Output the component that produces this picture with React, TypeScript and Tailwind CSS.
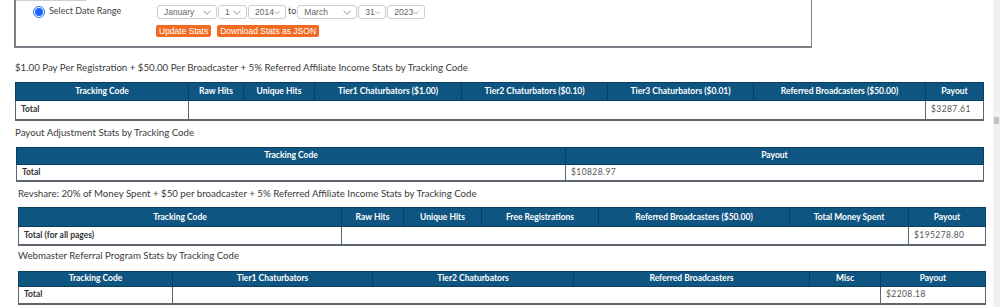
import React, {FC} from 'react';

type Col = { label: string, w: number };

interface StatsTableProps {
    cols: Col[],
    first: string,
    payout: string,
    headH: string,
    bodyH: string,
    className?: string,
}

const StatsTable: FC<StatsTableProps> = ({cols, first, payout, headH, bodyH, className}) => {
    return (
        <table className={`table-fixed border-collapse ${className ?? ''}`}>
            <colgroup>
                {cols.map((c, i) => <col key={i} style={{width: c.w}}/>)}
            </colgroup>
            <thead>
            <tr className={`${headH} bg-[#0f5581]`}>
                {cols.map((c, i) => (
                    <th
                        key={i}
                        className="border border-[#0a3d5e] p-0 text-center text-[8.5px] font-bold text-white"
                    >
                        {c.label}
                    </th>
                ))}
            </tr>
            </thead>
            <tbody>
            <tr className={`${bodyH} bg-white`}>
                {cols.map((c, i) => {
                    const isFirst = i === 0;
                    const isLast = i === cols.length - 1;
                    return (
                        <td
                            key={i}
                            className={`p-0 pl-[5px] text-left text-[8.5px] border-b-2 border-b-[#5d6670] ${
                                isFirst ? 'border-l border-r border-l-[#5d6670] border-r-[#5d6670] font-bold text-[#333]' : ''
                            } ${isLast ? 'border-l border-r border-[#5d6670] text-[#555] tracking-[0.4px]' : ''}`}
                        >
                            {isFirst ? first : isLast ? payout : ''}
                        </td>
                    );
                })}
            </tr>
            </tbody>
        </table>
    );
};

const Select: FC<{ value: string, w: string }> = ({value, w}) => (
    <div
        className={`${w} h-[14px] flex items-center justify-between rounded-[3px] border border-[#cdcdcd] bg-white pl-[6px] pr-[5px] font-['Liberation_Sans',sans-serif] text-[8.5px] text-[#666]`}
    >
        <span>{value}</span>
        <svg width="8" height="5" viewBox="0 0 8 5" className="text-[#888]">
            <path d="M0.5 0.8 L4 4.2 L7.5 0.8" fill="none" stroke="currentColor" strokeWidth="0.9"/>
        </svg>
    </div>
);

const Heading: FC<{ children: React.ReactNode, className?: string }> = ({children, className}) => (
    <div className={`text-[9.7px] text-[#3a3a3a] ${className ?? ''}`}>{children}</div>
);

const App: FC = () => {
    return (
        <div className="relative h-[307px] w-[1000px] overflow-hidden bg-white font-['Lato',sans-serif]">
            <div className="w-[987px]">
                {/* date range box */}
                <div className="relative ml-[14px] h-[48px] w-[798px] border-b-2 border-l-2 border-r border-[#7b8088]">
                    <div className="absolute left-0 top-0 h-px w-[70px] bg-[#cfcfcf]"/>
                    <div className="flex pl-[17px] pt-[5px]">
                        <div className="flex items-start gap-[4px] w-[124px]">
                            <span
                                className="mt-[1px] flex h-[12px] w-[12px] items-center justify-center rounded-full border border-[#1a73e8] bg-white">
                                <span className="h-[8px] w-[8px] rounded-full bg-[#1a66ff]"/>
                            </span>
                            <span className="text-[9px] leading-[12px] text-[#444]">Select Date Range</span>
                        </div>
                        <div className="flex flex-col gap-[6px]">
                            <div className="flex items-start gap-[1px]">
                                <Select value="January" w="w-[60px]"/>
                                <Select value="1" w="w-[29px]"/>
                                <Select value="2014" w="w-[38px]"/>
                                <span className="ml-[1px] text-[9px] leading-[11px] text-[#444]">to</span>
                                <Select value="March" w="w-[60px]"/>
                                <Select value="31" w="w-[28px]"/>
                                <Select value="2023" w="w-[38px]"/>
                            </div>
                            <div className="flex gap-[6px] -ml-[1px]">
                                <button
                                    className="h-[12px] rounded-[2px] bg-[#f26b22] px-[3px] text-[8.5px] leading-[12px] text-white font-['Liberation_Sans',sans-serif]">
                                    Update Stats
                                </button>
                                <button
                                    className="h-[12px] rounded-[2px] bg-[#f26b22] px-[3px] text-[8.5px] leading-[12px] text-white font-['Liberation_Sans',sans-serif]">
                                    Download Stats as JSON
                                </button>
                            </div>
                        </div>
                    </div>
                </div>

                <Heading className="ml-[15px] mt-[12px] leading-[14px]">
                    $1.00 Pay Per Registration + $50.00 Per Broadcaster + 5% Referred Affiliate Income Stats by Tracking Code
                </Heading>
                <StatsTable
                    className="ml-[15px] mt-[8px] w-[968px]"
                    headH="h-[18px]"
                    bodyH="h-[19px]"
                    first="Total"
                    payout="$3287.61"
                    cols={[
                        {label: 'Tracking Code', w: 173},
                        {label: 'Raw Hits', w: 55},
                        {label: 'Unique Hits', w: 71},
                        {label: 'Tier1 Chaturbators ($1.00)', w: 147},
                        {label: 'Tier2 Chaturbators ($0.10)', w: 146},
                        {label: 'Tier3 Chaturbators ($0.01)', w: 146},
                        {label: 'Referred Broadcasters ($50.00)', w: 172},
                        {label: 'Payout', w: 58},
                    ]}
                />

                <Heading className="ml-[15px] mt-[4px] leading-[14px]">
                    Payout Adjustment Stats by Tracking Code
                </Heading>
                <StatsTable
                    className="ml-[16px] mt-[8px] w-[967px]"
                    headH="h-[17px]"
                    bodyH="h-[17px]"
                    first="Total"
                    payout="$10828.97"
                    cols={[
                        {label: 'Tracking Code', w: 549},
                        {label: 'Payout', w: 418},
                    ]}
                />

                <Heading className="ml-[18px] mt-[4px] leading-[14px]">
                    Revshare: 20% of Money Spent + $50 per broadcaster + 5% Referred Affiliate Income Stats by Tracking Code
                </Heading>
                <StatsTable
                    className="ml-[18px] mt-[7px] w-[967px]"
                    headH="h-[19px]"
                    bodyH="h-[18px]"
                    first="Total (for all pages)"
                    payout="$195278.80"
                    cols={[
                        {label: 'Tracking Code', w: 323},
                        {label: 'Raw Hits', w: 62},
                        {label: 'Unique Hits', w: 78},
                        {label: 'Free Registrations', w: 117},
                        {label: 'Referred Broadcasters ($50.00)', w: 191},
                        {label: 'Total Money Spent', w: 119},
                        {label: 'Payout', w: 77},
                    ]}
                />

                <Heading className="ml-[18px] mt-[2px] leading-[14px]">
                    Webmaster Referral Program Stats by Tracking Code
                </Heading>
                <StatsTable
                    className="ml-[18px] mt-[9px] w-[967px]"
                    headH="h-[15px]"
                    bodyH="h-[18px]"
                    first="Total"
                    payout="$2208.18"
                    cols={[
                        {label: 'Tracking Code', w: 154},
                        {label: 'Tier1 Chaturbators', w: 200},
                        {label: 'Tier2 Chaturbators', w: 201},
                        {label: 'Referred Broadcasters', w: 236},
                        {label: 'Misc', w: 71},
                        {label: 'Payout', w: 105},
                    ]}
                />
            </div>

            {/* scrollbar */}
            <div className="absolute right-0 top-0 h-full w-[7px] bg-[#f1f1f1]">
                <div className="absolute left-[1px] top-[117px] h-[7px] w-[5px] bg-[#c1c1c1]"/>
            </div>
        </div>
    );
};

export default App;
